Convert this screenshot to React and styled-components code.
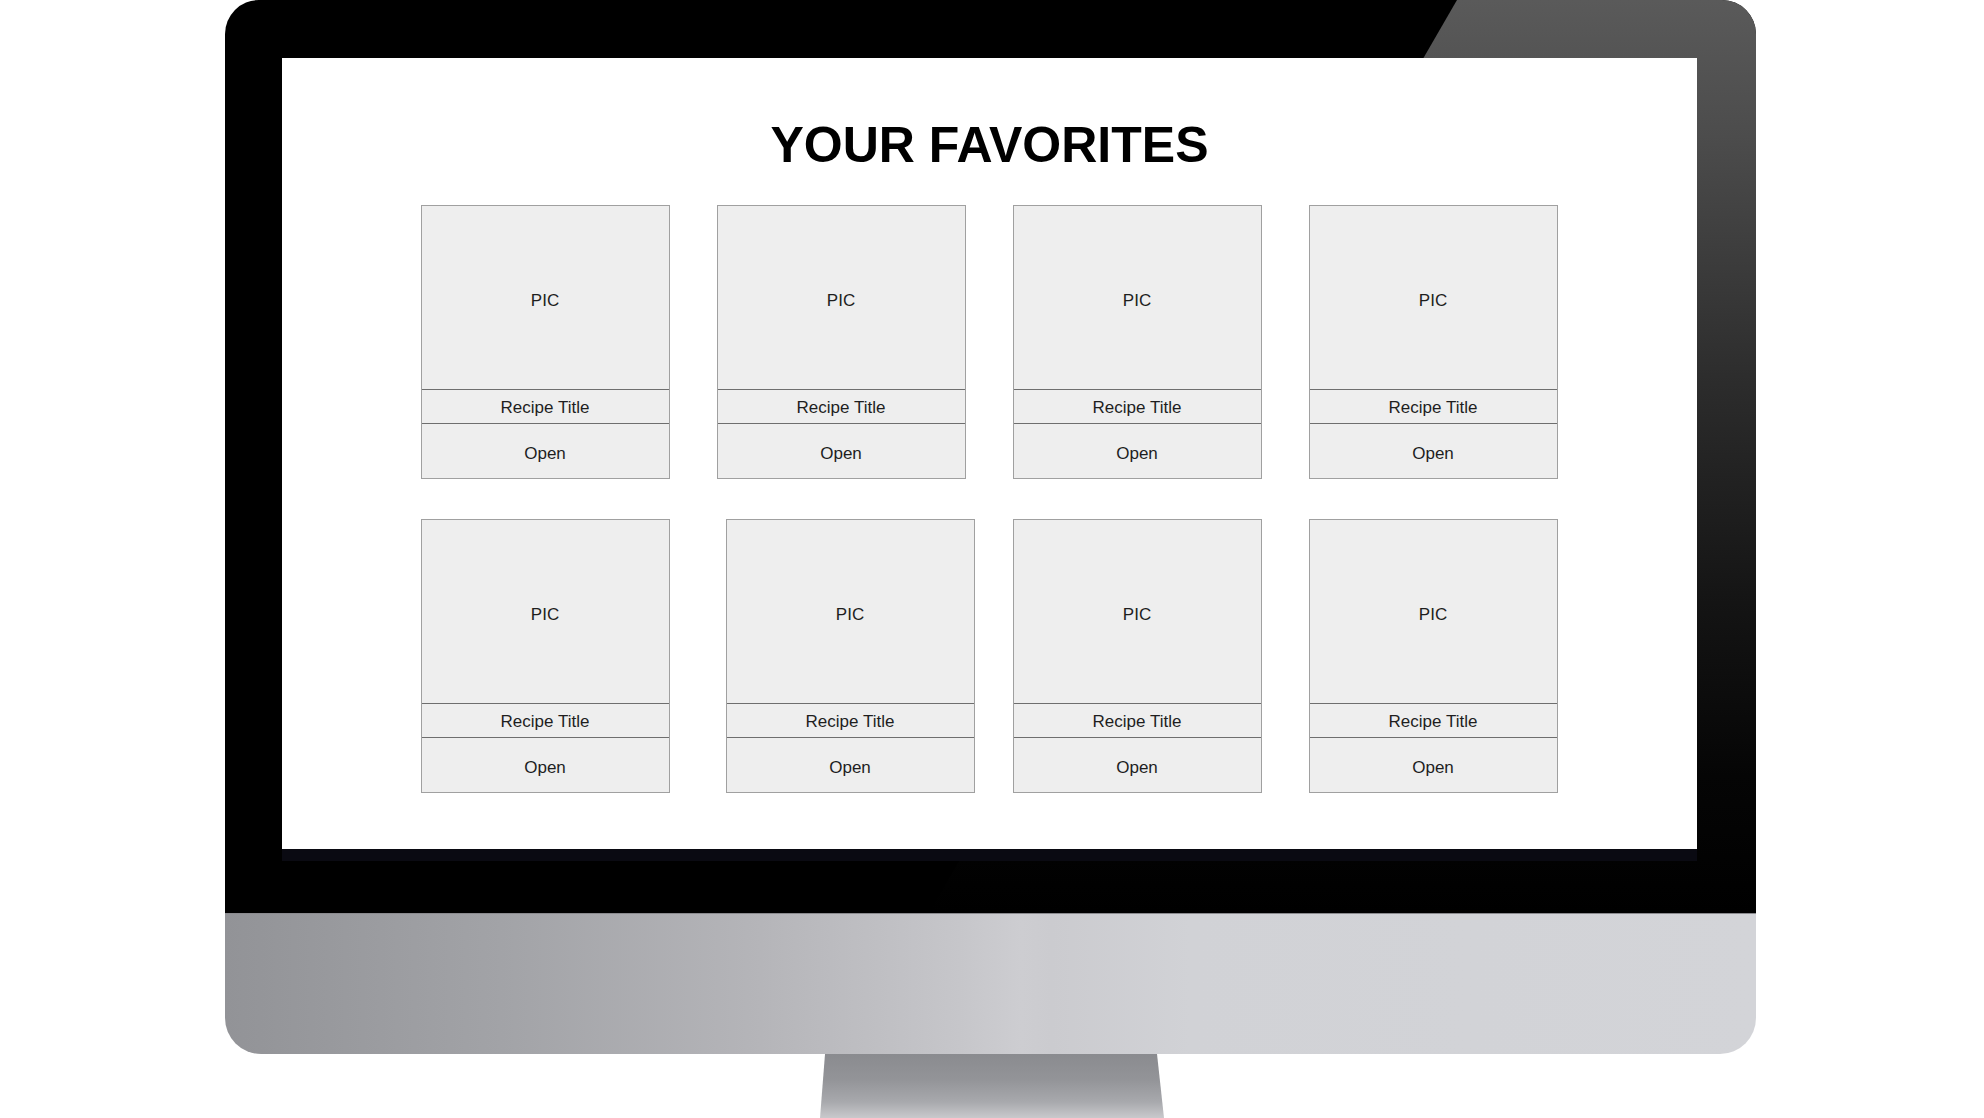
import styled, { createGlobalStyle } from 'styled-components'

const GlobalStyle = createGlobalStyle`
    body {
        margin: 0;
        background: #ffffff;
        font-family: "Liberation Sans", Arial, Helvetica, sans-serif;
        overflow: hidden;
    }
`

const favorites = [
    { id: 1 }, { id: 2 }, { id: 3 }, { id: 4 },
    { id: 5 }, { id: 6, nudge: 9 }, { id: 7 }, { id: 8 }
]

const App = () => {

    const cardList = favorites.map(fav => {
        return (
            <Card key={fav.id} $nudge={fav.nudge || 0}>
                <Section $height={183} $drop={6}>PIC</Section>
                <Section $height={33} $drop={2} $divider>Recipe Title</Section>
                <Section $height={54} $drop={5} $divider>Open</Section>
            </Card>
        )
    })

    return (
        <>
            <GlobalStyle />
            <Page>
                <Monitor>
                    <Bezel>
                        <Screen>
                            <Heading>YOUR FAVORITES</Heading>
                            <Grid>
                                {cardList}
                            </Grid>
                        </Screen>
                    </Bezel>
                    <Chin />
                    <Stand />
                </Monitor>
            </Page>
        </>
    )
}

const Page = styled.div`
    display: flex;
    height: 1118px;
    padding-left: 225px;
    overflow: hidden;
`

const Monitor = styled.div`
    display: flex;
    flex-direction: column;
    width: 1531px;
`

const Bezel = styled.div`
    position: relative;
    background: #000000;
    border-radius: 34px 34px 0 0;
    padding: 58px 59px 64px 57px;

    &::before {
        content: "";
        position: absolute;
        inset: 0;
        border-top-right-radius: 34px;
        clip-path: polygon(1232px 0, 100% 0, 100% 100%, 704px 100%);
        background: linear-gradient(to bottom, #5a5a5a 0%, #4c4c4c 15%, #2c2c2c 42%, #141414 66%, #050505 85%, #000000 100%);
    }
`

const Screen = styled.div`
    position: relative;
    z-index: 1;
    height: 791px;
    background: #ffffff;
    box-shadow: 0 12px 0 #0a0a12;
    display: flex;
    flex-direction: column;
    align-items: center;
    padding-top: 59px;
    box-sizing: border-box;
`

const Heading = styled.h1`
    margin: 0;
    font-family: "Liberation Sans", Arial, sans-serif;
    font-weight: 700;
    font-size: 50px;
    line-height: 57px;
    color: #000000;
`

const Grid = styled.div`
    display: grid;
    grid-template-columns: repeat(4, 249px);
    column-gap: 47px;
    row-gap: 40px;
    margin-top: 31px;
    margin-left: -1px;
`

const Card = styled.div`
    display: flex;
    flex-direction: column;
    width: 249px;
    box-sizing: border-box;
    border: 1px solid #a0a0a0;
    background: #eeeeee;
    margin-left: ${props => props.$nudge}px;
`

const Section = styled.div`
    display: flex;
    align-items: center;
    justify-content: center;
    box-sizing: border-box;
    height: ${props => props.$height + (props.$divider ? 1 : 0)}px;
    padding-top: ${props => props.$drop}px;
    border-top: ${props => props.$divider ? "1px solid #6e6e6e" : "none"};
    font-size: 17px;
    color: #1e1e1e;
`

const Chin = styled.div`
    height: 141px;
    border-radius: 0 0 36px 36px;
    border-top: 1px solid #8a8a8e;
    box-sizing: border-box;
    background: linear-gradient(to right, #929397 0%, #a2a3a7 18%, #b5b5b9 35%, #c6c6ca 48%, #cdcdd1 52%, #cbcbcf 54%, #d1d2d6 63%, #d3d4d8 100%);
`

const Stand = styled.div`
    width: 344px;
    height: 64px;
    margin-left: 595px;
    clip-path: polygon(5px 0, 337px 0, 100% 100%, 0 100%);
    background: linear-gradient(to bottom, #8a8b8f 0%, #939498 40%, #a8a9ad 75%, #c9c9cc 100%);
`

export default App
